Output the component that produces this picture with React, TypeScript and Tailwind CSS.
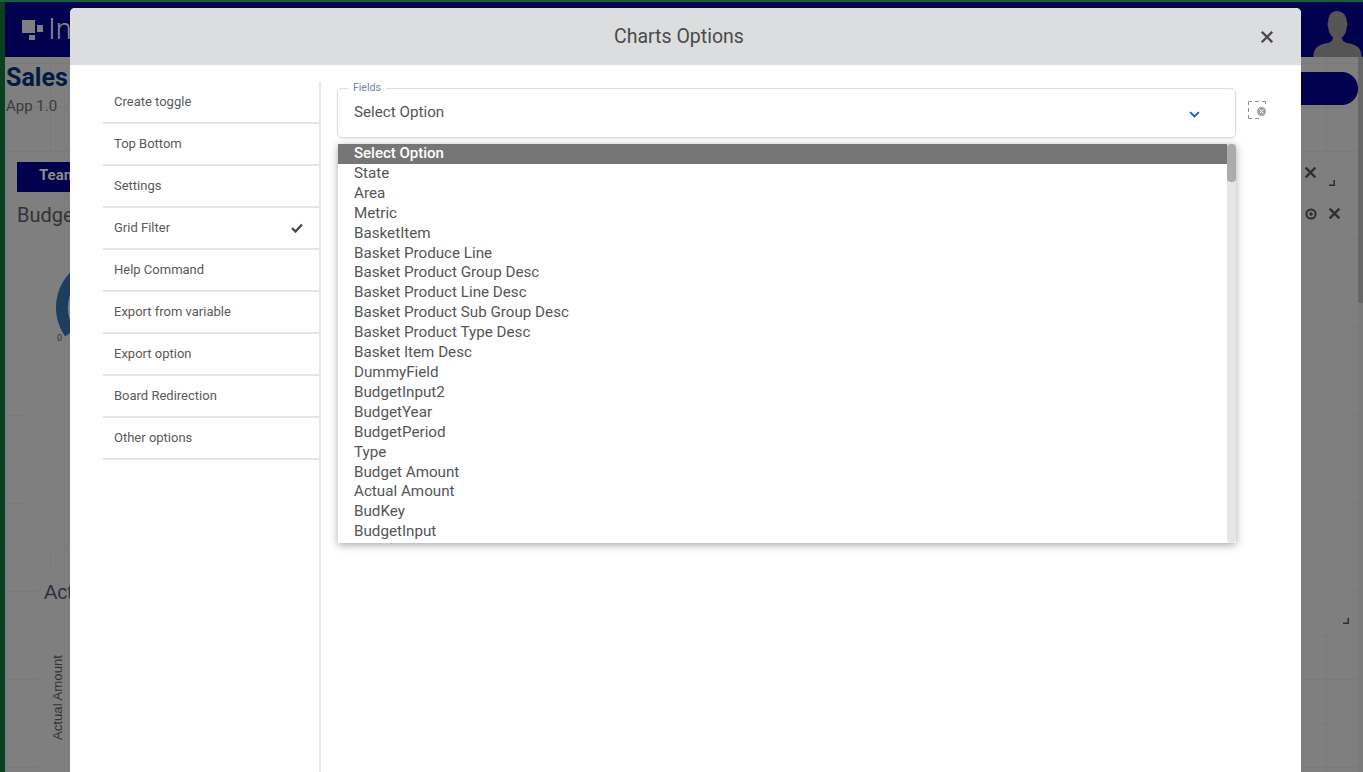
import React from "react";

const menu = ["Create toggle", "Top Bottom", "Settings", "Grid Filter", "Help Command", "Export from variable", "Export option", "Board Redirection", "Other options"];
const options = ["Select Option", "State", "Area", "Metric", "BasketItem", "Basket Produce Line", "Basket Product Group Desc", "Basket Product Line Desc", "Basket Product Sub Group Desc", "Basket Product Type Desc", "Basket Item Desc", "DummyField", "BudgetInput2", "BudgetYear", "BudgetPeriod", "Type", "Budget Amount", "Actual Amount", "BudKey", "BudgetInput"];

const Cross = ({ className }: { className: string }) => (
  <svg viewBox="0 0 12 12" className={className} fill="none" stroke="currentColor" strokeWidth="2.1">
    <path d="M1.5 1.5l9 9M10.5 1.5l-9 9" />
  </svg>
);

const Resize = ({ className }: { className: string }) => (
  <svg viewBox="0 0 6 6" className={className} fill="none" stroke="#2e2e2e" strokeWidth="1.5">
    <path d="M5.2 0v5.2H0" />
  </svg>
);

function Backdrop() {
  return (
    <div className="absolute inset-0 flex bg-[#7f7f7f] bg-[linear-gradient(#797b79_1px,transparent_1px),linear-gradient(90deg,#797b79_1px,transparent_1px)] bg-[size:44px_44px] bg-[position:6px_19px]">
      <div className="w-[5px] shrink-0 bg-[#0a4020]" />
      <div className="flex-1 min-w-0 flex flex-col">
        <div className="h-[2px] shrink-0 bg-[#14603a] -ml-[5px]" />
        <div className="h-[55px] shrink-0 bg-[#00004f] flex items-center justify-between pl-[17px]">
          <div className="flex items-center">
            <svg viewBox="0 0 22 20" className="w-[22px] h-[20px] text-[#7f7f7f]" fill="currentColor">
              <rect x="0" y="0" width="13" height="13" />
              <rect x="15" y="5" width="6" height="7" />
              <rect x="7" y="15" width="6" height="5" />
            </svg>
            <span className="ml-[4px] text-[29px] leading-none font-light text-[#8a8a8a] font-['Roboto',sans-serif]">In</span>
          </div>
          <svg viewBox="0 0 52 50" className="w-[52px] h-[49px] self-end text-[#565553]" fill="currentColor">
            <path d="M2 50c0-9 4-12 13-14 5-1 7-3 7-6-3-2-5-6-5-11-1-1-1-3 0-5 0-7 4-11 9-11s10 4 10 11c1 2 1 4 0 5 0 5-2 9-5 11 0 3 2 5 7 6 9 2 13 5 13 14z" />
          </svg>
        </div>
        <div className="flex-1 min-h-0 flex">
          <div className="flex-1 min-w-0 flex flex-col">
            <div className="h-[93px] shrink-0 flex justify-between pl-[1px] font-['Roboto',sans-serif]">
              <div className="pt-[6px]">
                <div className="text-[25px] leading-[30px] font-bold text-[#001c45]">Sales</div>
                <div className="mt-[4px] text-[15px] leading-[18px] text-[#3a3a3a]">App 1.0</div>
              </div>
              <div className="mt-[15px] h-[33px] w-[67px] rounded-r-[16px] bg-[#00004f]" />
            </div>
            <div className="flex-1 min-h-0 flex justify-between pl-[7px] pr-[1px]">
              <div className="w-[300px] flex flex-col">
                <div className="h-[35px] shrink-0 rounded-[6px] bg-[#7f7f7f] pl-[5px] pt-[5px] mt-[7px]">
                  <div className="w-[56px] h-[30px] bg-[#00004f] pl-[22px] text-[15px] leading-[27px] font-bold text-[#8a8a8a] font-['Roboto',sans-serif]">Team</div>
                </div>
                <div className="mt-[4px] h-[191px] shrink-0 rounded-[6px] bg-[#7f7f7f] pl-[5px] pt-[7px] relative">
                  <div className="text-[20px] leading-[24px] text-[#333] font-['Roboto',sans-serif]">Budget</div>
                  <svg viewBox="0 0 120 110" className="absolute left-[43px] top-[58px] w-[120px] h-[110px]" fill="none">
                    <path d="M15 79A44.5 44.5 0 1 1 51 98" stroke="#1c3f60" strokeWidth="12" />
                  </svg>
                  <div className="absolute left-[45px] top-[137px] text-[9px] leading-[10px] text-[#333] font-['Roboto',sans-serif]">0</div>
                </div>
                <div className="mt-[8px] ml-[13px] h-[152px] shrink-0 rounded-[6px] bg-[#7f7f7f]" />
                <div className="mt-[27px] ml-[27px] flex-1 rounded-t-[6px] bg-[#7f7f7f] pl-[5px] pt-[6px] font-['Liberation_Sans',sans-serif]">
                  <div className="text-[20px] leading-[24px] text-[#2f3340]">Actual</div>
                  <div className="mt-[51px] ml-[7px] [writing-mode:vertical-rl] rotate-180 text-[13.2px] leading-[14px] text-[#333]">Actual Amount</div>
                </div>
              </div>
              <div className="w-[120px] flex flex-col items-end">
                <div className="w-[106px] mt-[7px] h-[33px] shrink-0 mr-[19px] rounded-[6px] bg-[#7f7f7f] flex items-start justify-end gap-[12px] pr-[3px] pt-[9px]">
                  <Cross className="w-[13px] h-[13px] text-[#2f2f2f]" />
                  <Resize className="w-[6px] h-[6px] mt-[14px]" />
                </div>
                <div className="w-[120px] mr-[5px] mt-[6px] h-[431px] shrink-0 rounded-[6px] bg-[#7f7f7f] flex flex-col justify-between pr-[3px] pt-[11px] pb-[3px] items-end">
                  <div className="flex items-center gap-[11px] pr-[8px]">
                    <svg viewBox="0 0 12 12" className="w-[12px] h-[12px]" fill="none" stroke="#2f2f2f">
                      <circle cx="6" cy="6" r="4.600" strokeWidth="2" />
                      <circle cx="6" cy="6" r="1.500" fill="#2f2f2f" strokeWidth="0.5" />
                    </svg>
                    <Cross className="w-[13px] h-[13px] text-[#2f2f2f]" />
                  </div>
                  <Resize className="w-[6px] h-[6px]" />
                </div>
              </div>
            </div>
          </div>
          <div className="w-[5px] shrink-0 bg-[#7a7a7a]">
            <div className="h-[246px] bg-[#666666]" />
          </div>
        </div>
      </div>
    </div>
  );
}

function Modal() {
  return (
    <div className="absolute left-[70px] top-[8px] w-[1231px] h-[764px] rounded-t-[5px] overflow-hidden bg-white flex flex-col font-['Roboto',sans-serif]">
      <header className="h-[57px] shrink-0 bg-[#dcdddf] flex items-center justify-between pl-[544px] pr-[27px]">
        <h2 className="text-[19.5px] leading-[24px] font-normal text-[#4a4a4a]">Charts Options</h2>
        <Cross className="w-[14px] h-[14px] text-[#4a4a4a]" />
      </header>
      <div className="flex-1 flex pt-[17px] pl-[33px]">
        <nav className="w-[218px] shrink-0 border-r-2 border-r-[#e6e6e6]">
          {menu.map((m) => (
            <div key={m} className="h-[42px] border-b-2 border-b-[#e6e6e6] pl-[11px] pr-[16px] flex items-center justify-between text-[13px] text-[#5a5a5a]">
              <span>{m}</span>
              {m === "Grid Filter" && (
                <svg viewBox="0 0 12 10" className="w-[12px] h-[10px]" fill="none" stroke="#4a4a4a" strokeWidth="2.4">
                  <path d="M1 5l3.5 3.5L11 1.5" />
                </svg>
              )}
            </div>
          ))}
        </nav>
        <main className="flex-1 pl-[16px] pt-[6px]">
          <div className="flex items-start">
            <div className="relative w-[899px] h-[50px] rounded-[5px] border border-[#dcdcdc] shadow-[0_1px_2px_rgba(0,0,0,0.08)] flex items-center justify-between pl-[16px] pr-[35px]">
              <span className="absolute left-[10px] -top-[7px] bg-white px-[5px] text-[10.5px] leading-[12px] text-[#6f86a8]">Fields</span>
              <span className="text-[15.2px] leading-[20px] text-[#555] -mt-[2px]">Select Option</span>
              <svg viewBox="0 0 12 8" className="w-[11px] h-[7px] mt-[3px]" fill="none" stroke="#1a55cc" strokeWidth="2">
                <path d="M1 1.2l5 5 5-5" />
              </svg>
            </div>
            <svg viewBox="0 0 18 18" className="ml-[12px] mt-[13px] w-[18px] h-[18px]" fill="none">
              <path d="M4 .5H.5V4M.5 7v4M.5 14v3.500H4M7 .5h4M14 .5h3.500V3M7 17.500h4" stroke="#8f8f8f" />
              <circle cx="13.500" cy="10.500" r="4.500" fill="#a3a3a3" />
              <path d="M11.700 8.700l3.600 3.600M15.300 8.700l-3.600 3.600" stroke="#fff" />
            </svg>
          </div>
          <div className="relative mt-[6px] w-[898px] ml-[1px] h-[399px] bg-white shadow-[0_2px_8px_rgba(0,0,0,0.35)] pr-[9px]">
            {options.map((o, i) => (
              <div key={o} className={`h-[19.92px] pl-[16px] leading-[19.92px] ${i === 0 ? "bg-[#767676] text-white font-medium text-[15px]" : "text-[15.2px] text-[#555]"}`}>
                {o}
              </div>
            ))}
            <div className="absolute right-0 top-0 bottom-0 w-[9px] rounded-b-[4px] bg-[#e6e6e6]">
              <div className="h-[38px] rounded-[4px] bg-[#ababab]" />
            </div>
          </div>
        </main>
      </div>
    </div>
  );
}

export default function App() {
  return (
    <div className="relative w-[1363px] h-[772px] overflow-hidden">
      <Backdrop />
      <Modal />
    </div>
  );
}
